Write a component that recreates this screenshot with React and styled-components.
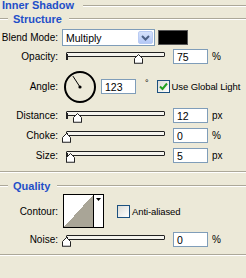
import React from 'react';
import styled, { createGlobalStyle } from 'styled-components';

const GlobalStyle = createGlobalStyle`
  html, body {
    margin: 0;
    padding: 0;
    background: #ece9d8;
  }
  body {
    font-family: "Liberation Sans", Arial, sans-serif;
    font-size: 10px;
    color: #000;
  }
`;

const Panel = styled.div`
  width: 246px;
  height: 278px;
  display: flex;
  flex-direction: column;
  background: #ece9d8;
  overflow: hidden;
`;

const Etched = styled.div`
  flex: 1 1 auto;
  min-width: 10px;
  height: 2px;
  background: linear-gradient(#aca899 50%, #fff 50%);
`;

const Separator = styled(Etched)`
  flex: none;
  width: 100%;
  margin-top: ${(p) => p.$mt}px;
`;

const TitleBar = styled.div`
  display: flex;
  align-items: center;
  height: 11px;
  padding-left: 2px;
  color: #1f4fc8;
  font-weight: bold;
  font-size: 11px;
  line-height: 11px;
  white-space: nowrap;
`;

const TitleRule = styled.div`
  flex: 1;
  height: 2px;
  margin-left: 9px;
  margin-top: 1px;
  border-top: 1px solid #aca899;
  border-bottom: 1px solid #ffffff;
  box-sizing: border-box;
  background: #aca899;
`;

const Legend = styled.div`
  display: flex;
  align-items: center;
  height: 12px;
  margin-top: ${(p) => p.$mt}px;
  color: #1f4fc8;
  font-weight: bold;
  font-size: 11px;
  line-height: 11px;
`;

const LegendStub = styled(Etched)`
  flex: none;
  width: 8px;
  min-width: 0;
`;

const LegendText = styled.span`
  padding: 0 7px 0 5px;
  white-space: nowrap;
`;

const Row = styled.div`
  display: flex;
  align-items: center;
  height: ${(p) => p.$h}px;
  margin-top: ${(p) => p.$mt}px;
`;

const Label = styled.div`
  width: 58px;
  flex: none;
  text-align: right;
  white-space: nowrap;
`;

const Select = styled.div`
  margin-left: 4px;
  width: 93px;
  height: 17px;
  box-sizing: border-box;
  border: 1px solid #7f9db9;
  background: #fff;
  display: flex;
  align-items: center;
  justify-content: space-between;
  padding-left: 3px;
  font-size: 10.5px;
`;

const SelectButton = styled.div`
  width: 15px;
  height: 13px;
  margin-right: 1px;
  box-sizing: border-box;
  border: 1px solid #b9cbf3;
  border-radius: 2px;
  background: linear-gradient(#d6e2fb, #b4c8f6);
  display: flex;
  align-items: center;
  justify-content: center;
`;

const Swatch = styled.div`
  margin-left: 3px;
  width: 30px;
  height: 15px;
  background: #000;
  border: 1px solid #555;
  box-sizing: border-box;
`;

const SliderArea = styled.div`
  position: relative;
  margin-left: 6px;
  width: 103px;
  height: 15px;
  flex: none;
`;

const Track = styled.div`
  position: absolute;
  left: 2px;
  right: 2px;
  top: 3px;
  height: 5px;
  box-sizing: border-box;
  border: 1px solid #222;
  border-radius: 1px;
  background: #f5f4ee;
  &::before {
    content: '';
    position: absolute;
    left: -1px;
    top: 1px;
    width: 2px;
    height: 6px;
    background: #222;
  }
`;

const Thumb = styled.svg`
  position: absolute;
  top: 5px;
  width: 9px;
  height: 10px;
`;

const NumberBox = styled.div`
  margin-left: ${(p) => p.$ml}px;
  width: 35px;
  height: 15px;
  box-sizing: border-box;
  border: 1px solid #7f9db9;
  background: #fff;
  padding: 1px 0 0 3px;
  font-size: 10.5px;
  line-height: 12px;
  flex: none;
`;

const Unit = styled.span`
  margin-left: 4px;
  font-size: 10px;
`;

const Dial = styled.svg`
  margin-left: 5px;
  width: 34px;
  height: 34px;
  flex: none;
`;

const Degree = styled.span`
  margin-left: 9px;
  align-self: flex-start;
  margin-top: 8px;
  font-size: 9px;
`;

const CheckBox = styled.div`
  margin-left: ${(p) => p.$ml}px;
  width: 13px;
  height: 13px;
  box-sizing: border-box;
  border: 1px solid #1c5180;
  background: linear-gradient(135deg, #dcdcd6, #fff);
  display: flex;
  align-items: center;
  justify-content: center;
  flex: none;
`;

const CheckText = styled.span`
  margin-left: 2px;
  white-space: nowrap;
  font-size: 9.5px;
  letter-spacing: -0.1px;
`;

const Contour = styled.div`
  margin-left: 5px;
  width: 41px;
  height: 34px;
  box-sizing: border-box;
  border: 1px solid #000;
  display: flex;
  background: #fff;
  flex: none;
`;

const ContourCurve = styled.div`
  width: 29px;
  height: 100%;
  background: linear-gradient(to top left, #a9a597 50%, #fff 50%);
  border-right: 1px solid #000;
`;

const ContourArrow = styled.div`
  flex: 1;
  display: flex;
  justify-content: center;
  padding-top: 3px;
`;

function Slider({ pos }) {
  return (
    <SliderArea>
      <Track />
      <Thumb viewBox="0 0 9 10" style={{ left: `${2 + pos * 99 - 4}px` }}>
        <path d="M0.5 9.5 V4.5 L4.5 0.5 L8.5 4.5 V9.5 Z" fill="#fff" stroke="#222" strokeWidth="1" />
        <path d="M1 9 H8" stroke="#888" strokeWidth="1" />
      </Thumb>
    </SliderArea>
  );
}

function SliderRow({ label, pos, value, unit, mt }) {
  return (
    <Row $h={15} $mt={mt}>
      <Label>{label}</Label>
      <Slider pos={pos} />
      <NumberBox $ml={6}>{value}</NumberBox>
      <Unit>{unit}</Unit>
    </Row>
  );
}

function Check({ checked, ml }) {
  return (
    <CheckBox $ml={ml}>
      {checked && (
        <svg width="9" height="9" viewBox="0 0 9 9">
          <path d="M1 4.5 L3.5 7 L8 1.5" fill="none" stroke="#21a121" strokeWidth="2" />
        </svg>
      )}
    </CheckBox>
  );
}

export default function App() {
  const angle = (123 * Math.PI) / 180;
  const hx = 17 + Math.cos(angle) * 13;
  const hy = 17 - Math.sin(angle) * 13;

  return (
    <>
      <GlobalStyle />
      <Panel>
        <TitleBar>
          Inner Shadow
          <TitleRule />
        </TitleBar>
        <Legend $mt={2}>
          <LegendStub />
          <LegendText>Structure</LegendText>
          <Etched />
        </Legend>

        <Row $h={17} $mt={4}>
          <Label>Blend Mode:</Label>
          <Select>
            Multiply
            <SelectButton>
              <svg width="9" height="6" viewBox="0 0 9 6">
                <path d="M1 1 L4.5 4.5 L8 1" fill="none" stroke="#4d6185" strokeWidth="2" />
              </svg>
            </SelectButton>
          </Select>
          <Swatch />
        </Row>

        <SliderRow label="Opacity:" pos={0.73} value="75" unit="%" mt={3} />

        <Row $h={33} $mt={6}>
          <Label>Angle:</Label>
          <Dial viewBox="0 0 34 34">
            <circle cx="17" cy="17" r="15" fill="none" stroke="#000" strokeWidth="2" />
            <line x1="17" y1="17" x2={hx} y2={hy} stroke="#000" strokeWidth="1" />
            <circle cx="17" cy="17" r="1.6" fill="#000" />
          </Dial>
          <NumberBox $ml={4}>123</NumberBox>
          <Degree>°</Degree>
          <Check checked ml={8} />
          <CheckText>Use Global Light</CheckText>
        </Row>

        <SliderRow label="Distance:" pos={0.11} value="12" unit="px" mt={5} />
        <SliderRow label="Choke:" pos={0} value="0" unit="%" mt={5} />
        <SliderRow label="Size:" pos={0.04} value="5" unit="px" mt={5} />

        <Separator $mt={8} />

        <Legend $mt={7}>
          <LegendStub />
          <LegendText>Quality</LegendText>
          <Etched />
        </Legend>

        <Row $h={34} $mt={2}>
          <Label>Contour:</Label>
          <Contour>
            <ContourCurve />
            <ContourArrow>
              <svg width="5" height="3" viewBox="0 0 5 3">
                <path d="M0 0 H5 L2.5 3 Z" fill="#000" />
              </svg>
            </ContourArrow>
          </Contour>
          <Check ml={13} />
          <CheckText>Anti-aliased</CheckText>
        </Row>

        <SliderRow label="Noise:" pos={0} value="0" unit="%" mt={4} />

        <Separator $mt={7} />
      </Panel>
    </>
  );
}
